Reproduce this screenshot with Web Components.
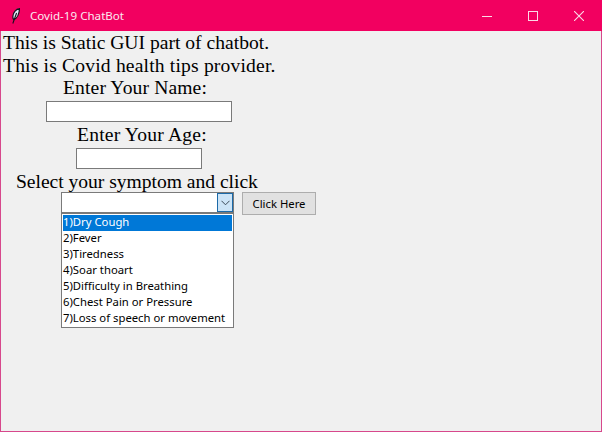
<!DOCTYPE html>
<html><head><meta charset="utf-8"><style>
html,body{margin:0;padding:0;background:#f0f0f0}
body{width:602px;height:432px;overflow:hidden}
</style></head><body>
<template id="t-window"><style>
:host{display:flex;flex-direction:column;box-sizing:border-box;width:602px;height:432px;background:#f0f0f0;border:1px solid #d7488c;border-top:0}
.body{flex:1;display:flex;flex-direction:column;align-items:flex-start;font:19.6px/24px "Liberation Serif",serif;color:#000;min-height:0}
</style><slot name="bar"></slot><div class="body"><slot></slot></div></template>

<template id="t-titlebar"><style>
:host{display:flex;align-items:center;height:31px;margin:0 -1px;background:#f20060;color:#fbe9f0;flex:none}
svg{display:block}
.feather{margin-left:12px;margin-right:10px}
.title{flex:1;font:11.6px "Noto Sans",sans-serif}
.btn{width:46px;height:31px;display:flex;align-items:center;justify-content:center}
</style>
<svg class="feather" width="8" height="16" viewBox="0 0 8 16"><path d="M7.500 .6C4 1 1.200 4.500 .9 8.200c-.1 1.500.2 2.800.8 3.300C5.200 10.500 7.300 5.500 7.500 .6z" fill="#dfe8f8" stroke="#10131c" stroke-width="1.200"/><path d="M.8 15.500 4.600 5" stroke="#10131c" stroke-width="1.100" fill="none"/></svg>
<span class="title"><slot></slot></span>
<span class="btn"><svg width="10" height="10" viewBox="0 0 10 10"><path d="M0 5.500H10" stroke="#fbd9e6" stroke-width="1"/></svg></span>
<span class="btn"><svg width="10" height="10" viewBox="0 0 10 10"><rect x=".5" y=".5" width="9" height="9" fill="none" stroke="#fbd9e6"/></svg></span>
<span class="btn"><svg width="10" height="10" viewBox="0 0 10 10"><path d="M0 0 10 10M10 0 0 10" stroke="#fbd9e6" stroke-width="1.100"/></svg></span>
</template>

<template id="t-label"><style>
:host{display:block;white-space:pre;height:var(--h,23px);line-height:var(--lh,24px);margin-left:var(--x,0);letter-spacing:var(--ls,0)}
</style><slot></slot></template>

<template id="t-entry"><style>
:host{display:block;box-sizing:border-box;height:21px;width:var(--w,186px);margin-left:var(--x,0);margin-bottom:var(--b,0);background:#fff;border:1px solid #7a7a7a}
</style></template>

<template id="t-combo-row"><style>
:host{display:flex;align-items:flex-start;margin-left:60px;gap:8px;font:11.3px "Noto Sans",sans-serif;color:#000}
.field{box-sizing:border-box;width:173px;height:21px;background:#fff;border:1px solid #7a7a7a;display:flex;justify-content:flex-end}
.arrow{box-sizing:border-box;width:16px;height:19px;background:#cce4f7;border:1px solid #1c6aa8;display:flex;align-items:center;justify-content:center}
button{all:unset;box-sizing:border-box;width:74px;height:23px;border:1px solid #adadad;background:#e1e1e1;text-align:center;font:11.3px/21px "Noto Sans",sans-serif;color:#000}
</style>
<div class="field"><span class="arrow"><svg width="9" height="6" viewBox="0 0 9 6"><path d="M.5 .8 4.500 4.800 8.500 .8" fill="none" stroke="#3b4a58" stroke-width="1"/></svg></span></div>
<button><slot></slot></button></template>

<template id="t-list"><style>
:host{display:block;box-sizing:border-box;width:173px;height:115px;margin-left:60px;margin-top:-2px;background:#fff;border:1px solid #7a7a7a;padding:1px;font:11.3px/14px "Noto Sans",sans-serif;color:#000}
</style><slot></slot></template>

<template id="t-item"><style>
:host{display:block;height:16px;white-space:pre}
:host([selected]){background:#0078d7;color:#fff}
</style><slot></slot></template>

<script>
for (const [tag,id] of [["app-window","t-window"],["title-bar","t-titlebar"],["tk-label","t-label"],["tk-entry","t-entry"],["combo-row","t-combo-row"],["drop-list","t-list"],["list-item","t-item"]]) {
  customElements.define(tag, class extends HTMLElement {
    constructor(){super();this.attachShadow({mode:"open"}).appendChild(document.getElementById(id).content.cloneNode(true));}
  });
}
</script>

<app-window>
  <title-bar slot="bar">Covid-19 ChatBot</title-bar>
  <tk-label style="--x:2px">This is Static GUI part of chatbot.</tk-label>
  <tk-label style="--x:2px;--ls:.17px">This is Covid health tips provider.</tk-label>
  <tk-label style="--x:62px;--h:24px;--lh:22px;--ls:.12px">Enter Your Name:</tk-label>
  <tk-entry style="--x:45px;--w:186px;--b:3px"></tk-entry>
  <tk-label style="--x:76px;--h:23px;--lh:20px;--ls:.2px">Enter Your Age:</tk-label>
  <tk-entry style="--x:75px;--w:126px;--b:3px"></tk-entry>
  <tk-label style="--x:15px;--h:20px;--lh:20px;--ls:-.03px">Select your symptom and click</tk-label>
  <combo-row>Click Here</combo-row>
  <drop-list>
    <list-item selected>1)Dry Cough</list-item>
    <list-item>2)Fever</list-item>
    <list-item>3)Tiredness</list-item>
    <list-item>4)Soar thoart</list-item>
    <list-item>5)Difficulty in Breathing</list-item>
    <list-item>6)Chest Pain or Pressure</list-item>
    <list-item>7)Loss of speech or movement</list-item>
  </drop-list>
</app-window>
</body></html>
